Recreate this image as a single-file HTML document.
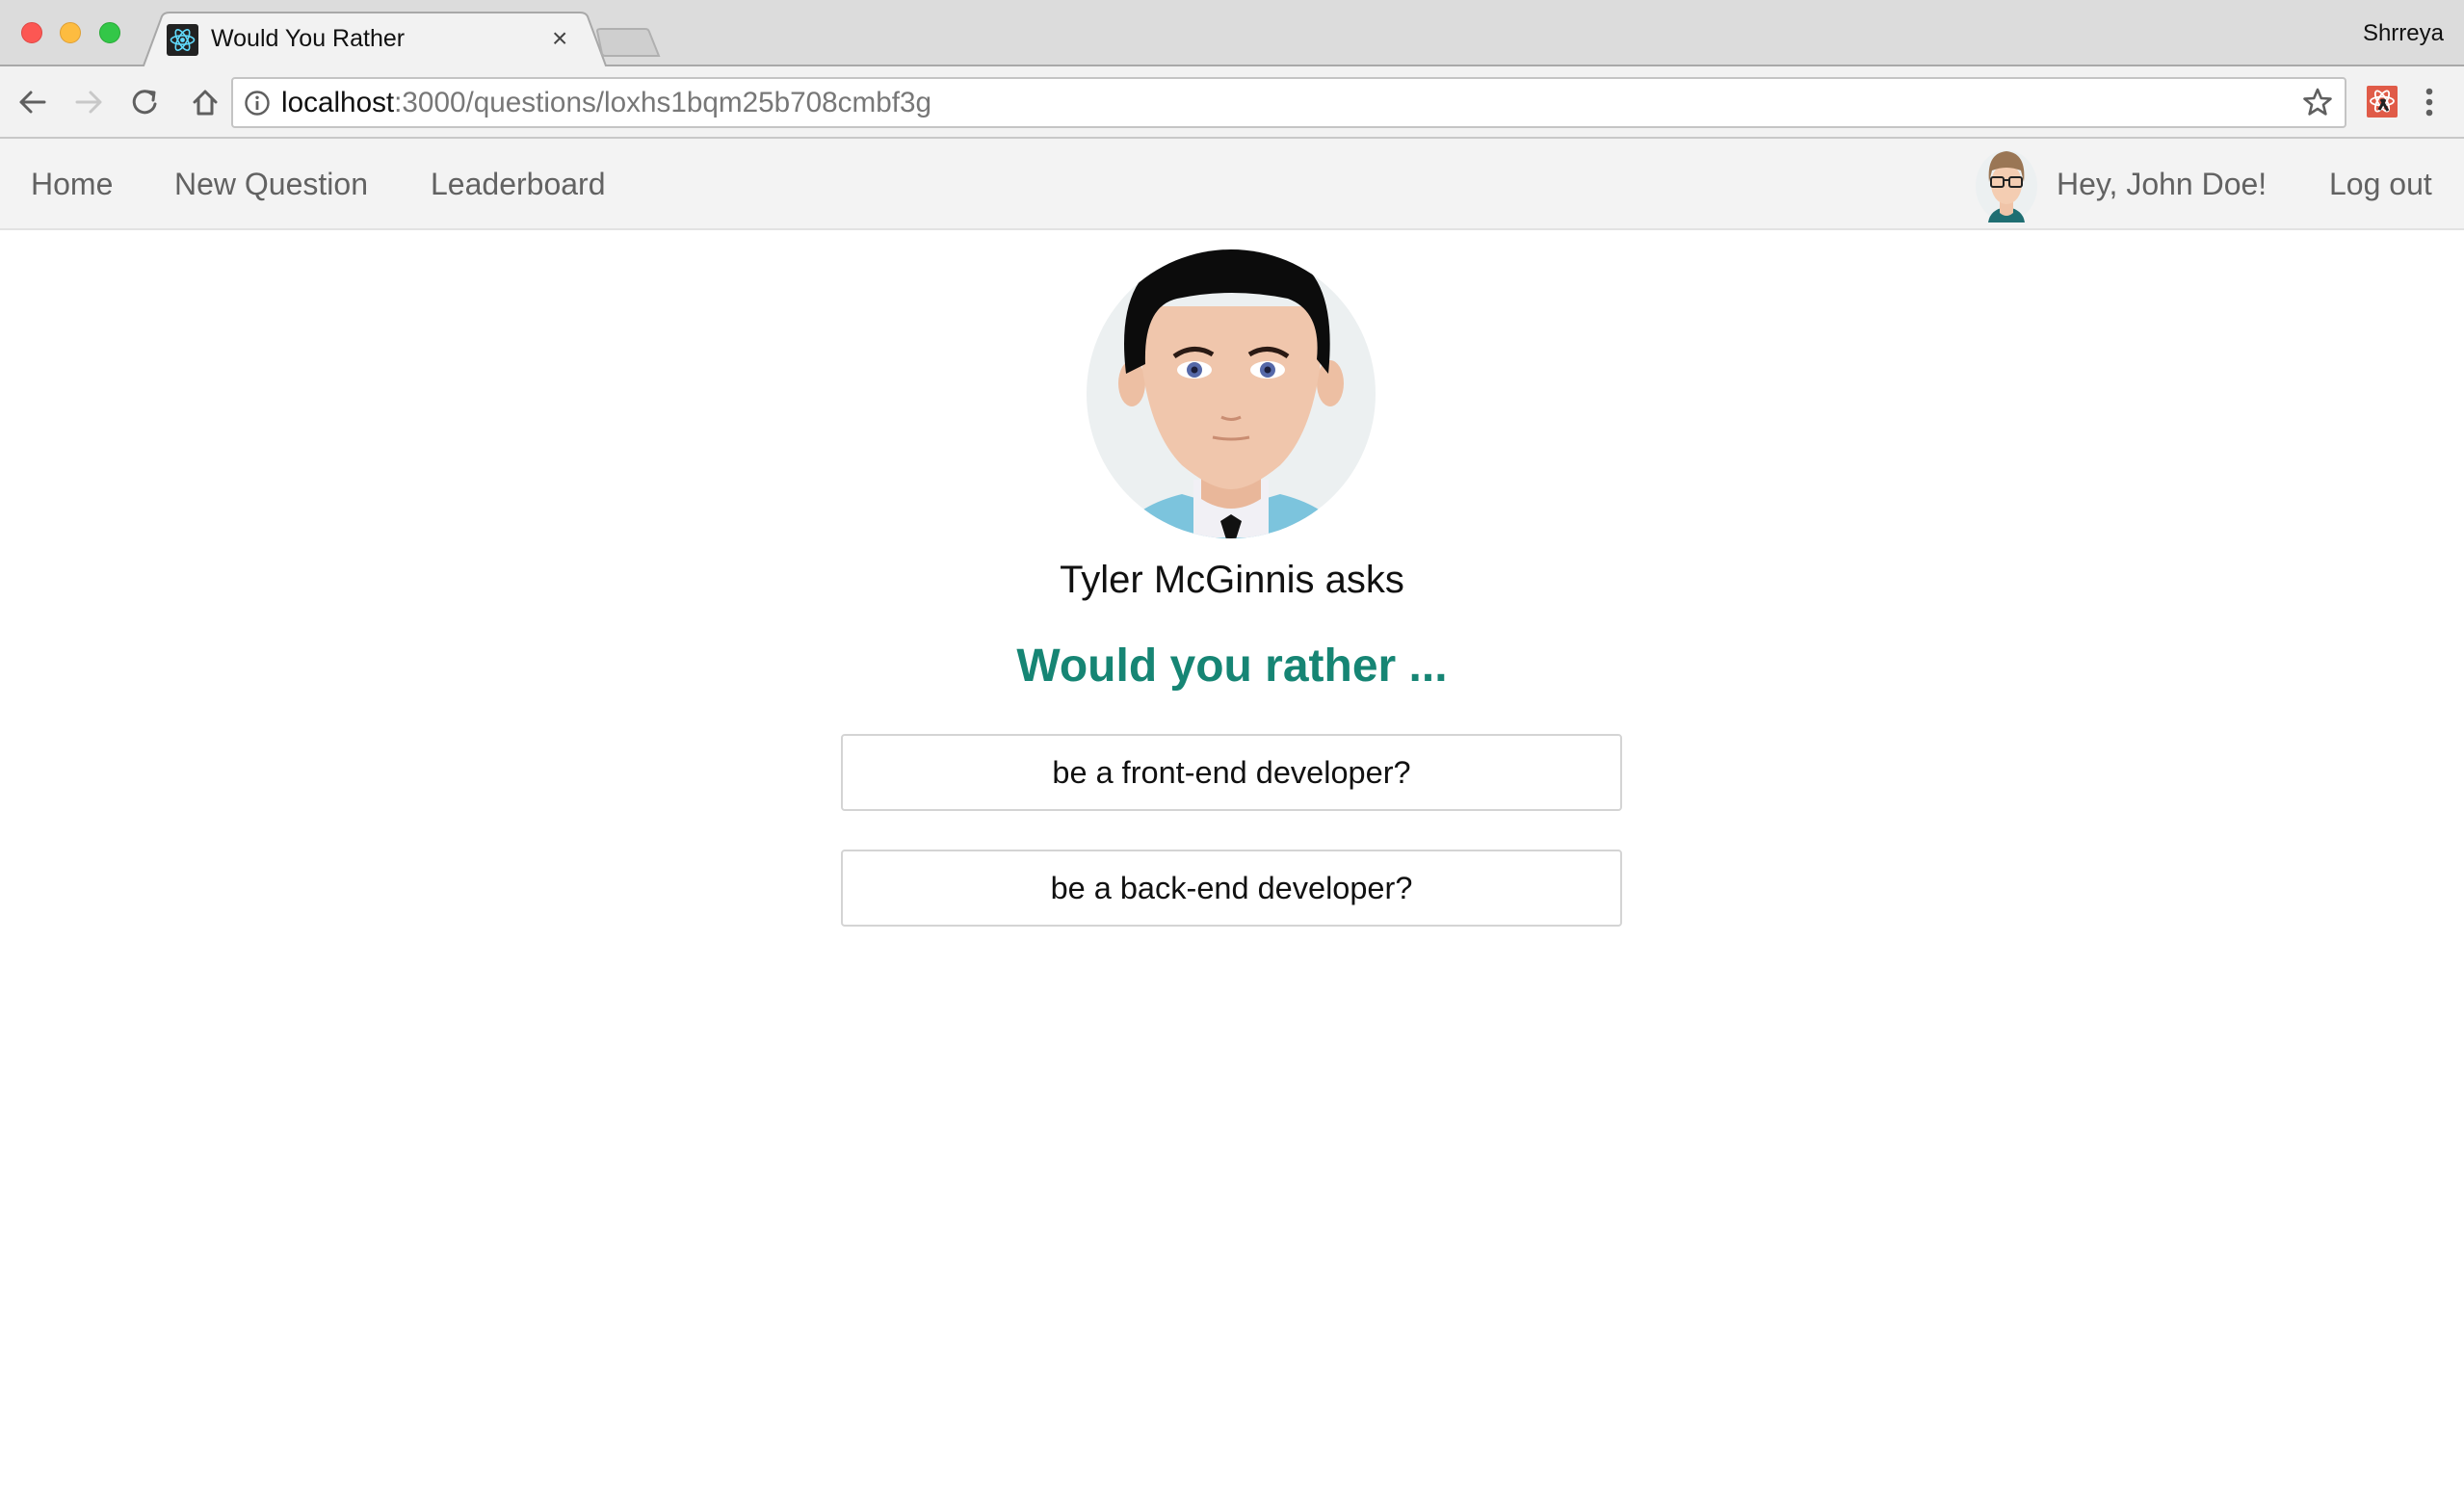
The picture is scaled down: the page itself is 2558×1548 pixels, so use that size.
<!DOCTYPE html>
<html><head><meta charset="utf-8"><style>
*{margin:0;padding:0;box-sizing:border-box}
body{width:2558px;height:1548px;background:#fff;font-family:"Liberation Sans",Arial,sans-serif;position:relative;overflow:hidden}
.abs{position:absolute}
#tabbar{left:0;top:0;width:2558px;height:69px;background:#dcdcdc;border-bottom:2px solid #a8a8a8}
#toolbar{left:0;top:69px;width:2558px;height:75px;background:#f2f2f2;border-bottom:2px solid #c8c8c8}
#nav{left:0;top:144px;width:2558px;height:95px;background:#f3f3f3;border-bottom:2px solid #e2e2e2}
.dot{width:22px;height:22px;border-radius:50%;top:23px}
.navt{font-size:32px;color:#626262;top:173px;white-space:nowrap}
.btn{left:873px;width:811px;height:80px;border:2px solid #d4d4d4;border-radius:4px;font-size:32.5px;text-align:center;line-height:76px;color:#111}
</style></head><body>
<div id="tabbar" class="abs"></div>
<div class="abs dot" style="left:22px;background:#fc5753;border:1px solid #df4744"></div>
<div class="abs dot" style="left:62px;background:#fdbc40;border:1px solid #de9f34"></div>
<div class="abs dot" style="left:103px;background:#33c748;border:1px solid #27aa35"></div>
<svg class="abs" style="left:140px;top:12px" width="560" height="59"><path d="M8 59 L28 5 Q30 1 36 1 L462 1 Q468 1 470 5 L490 59 Z" fill="#f2f2f2" stroke="#a8a8a8" stroke-width="2"/></svg>
<svg class="abs" style="left:618px;top:28px" width="72" height="34"><path d="M2 4 Q2 2 6 2 L52 2 Q55 2 56 5 L66 30 L10 30 Q8 30 7 28 Z" fill="#cfcfcf" stroke="#b0b0b0" stroke-width="2"/></svg>
<svg class="abs" style="left:173px;top:25px" width="33" height="33"><rect width="33" height="33" rx="3" fill="#222"/><g fill="none" stroke="#61dafb" stroke-width="1.6"><ellipse cx="16.5" cy="16.5" rx="12" ry="4.6"/><ellipse cx="16.5" cy="16.5" rx="12" ry="4.6" transform="rotate(60 16.5 16.5)"/><ellipse cx="16.5" cy="16.5" rx="12" ry="4.6" transform="rotate(120 16.5 16.5)"/></g><circle cx="16.5" cy="16.5" r="2.4" fill="#61dafb"/></svg>
<div class="abs" style="left:219px;top:26px;font-size:25px;color:#111">Would You Rather</div>
<div class="abs" style="left:573px;top:24px;font-size:28px;color:#444">×</div>
<div class="abs" style="right:21px;top:21px;font-size:24px;color:#111">Shrreya</div>
<div id="toolbar" class="abs"></div>
<svg class="abs" style="left:18px;top:90px" width="220" height="34" fill="none" stroke-width="3" stroke-linecap="round" stroke-linejoin="round">
<path d="M4 16 H28 M4 16 L14 6 M4 16 L14 26" stroke="#5f5f5f"/>
<path d="M86 16 H62 M86 16 L76 6 M86 16 L76 26" stroke="#c8c8c8"/>
<path d="M140 8 A11 11 0 1 0 143 18" stroke="#5f5f5f"/><path d="M134 5 L142 6 L141 14" stroke="#5f5f5f"/>
<path d="M184 16 L195 5 L206 16 M188 13 V28 H202 V13" stroke="#5f5f5f"/>
</svg>
<div class="abs" style="left:240px;top:80px;width:2196px;height:53px;background:#fff;border:2px solid #c4c4c4;border-radius:4px"></div>
<svg class="abs" style="left:253px;top:93px" width="28" height="28"><circle cx="14" cy="14" r="11.5" fill="none" stroke="#5f5f5f" stroke-width="2.4"/><rect x="12.6" y="12" width="2.8" height="9" fill="#5f5f5f"/><circle cx="14" cy="8.3" r="1.7" fill="#5f5f5f"/></svg>
<div class="abs" style="left:292px;top:90px;font-size:29.7px;color:#111;white-space:nowrap">localhost<span style="color:#777">:3000/questions/loxhs1bqm25b708cmbf3g</span></div>
<svg class="abs" style="left:2390px;top:90px" width="32" height="32"><path d="M16 3 L19.8 12 L29.5 12.6 L22 18.8 L24.4 28.4 L16 23 L7.6 28.4 L10 18.8 L2.5 12.6 L12.2 12 Z" fill="none" stroke="#5f5f5f" stroke-width="2.6" stroke-linejoin="round"/></svg>
<svg class="abs" style="left:2457px;top:89px" width="32" height="33"><rect width="32" height="33" rx="2" fill="#e05b48"/><g fill="none" stroke="#fff" stroke-width="1.8"><ellipse cx="16" cy="16" rx="12" ry="4.5"/><ellipse cx="16" cy="16" rx="12" ry="4.5" transform="rotate(60 16 16)"/><ellipse cx="16" cy="16" rx="12" ry="4.5" transform="rotate(120 16 16)"/></g><path d="M15 14 L22 26 M19 14 L13 25" stroke="#222" stroke-width="3"/></svg>
<svg class="abs" style="left:2514px;top:90px" width="16" height="34"><circle cx="8" cy="5" r="3.3" fill="#5f5f5f"/><circle cx="8" cy="16" r="3.3" fill="#5f5f5f"/><circle cx="8" cy="27" r="3.3" fill="#5f5f5f"/></svg>
<div id="nav" class="abs"></div>
<div class="abs navt" style="left:32px">Home</div>
<div class="abs navt" style="left:181px">New Question</div>
<div class="abs navt" style="left:447px">Leaderboard</div>
<svg class="abs" style="left:2050px;top:149px" width="66" height="82" viewBox="0 0 66 82">
<ellipse cx="33" cy="44" rx="32" ry="37" fill="#ecf0f1"/>
<path d="M14 82 Q16 68 33 66 Q50 68 52 82 Z" fill="#1f6e72"/>
<path d="M26 60 L26 72 Q33 78 40 72 L40 60 Z" fill="#f0c4a8"/>
<ellipse cx="33" cy="42" rx="16" ry="21" fill="#f4cdb2"/>
<path d="M15 40 Q12 10 33 8 Q54 10 51 40 L48 28 Q33 22 18 28 Z" fill="#9a7655"/>
<g fill="none" stroke="#222" stroke-width="2"><rect x="17" y="35" width="13" height="10" rx="2"/><rect x="36" y="35" width="13" height="10" rx="2"/><path d="M30 38 H36"/></g>
</svg>
<div class="abs navt" style="left:2135px">Hey, John Doe!</div>
<div class="abs navt" style="left:2418px">Log out</div>
<svg class="abs" style="left:1127px;top:258px" width="302" height="302" viewBox="0 0 302 302">
<defs><clipPath id="c"><ellipse cx="151" cy="151" rx="150" ry="150"/></clipPath></defs>
<ellipse cx="151" cy="151" rx="150" ry="150" fill="#ecf0f1"/>
<g clip-path="url(#c)">
<path d="M30 310 Q40 270 100 255 L151 270 L202 255 Q262 270 272 310 Z" fill="#7cc4dd"/>
<path d="M112 240 L112 300 L190 300 L190 240 Z" fill="#f1f0f5"/>
<path d="M140 283 L151 276 L162 283 L156 302 L146 302 Z" fill="#111"/>
<path d="M120 215 L120 260 Q151 280 182 260 L182 215 Z" fill="#e9b79a"/>
<ellipse cx="48" cy="140" rx="14" ry="24" fill="#edbfa3"/>
<ellipse cx="254" cy="140" rx="14" ry="24" fill="#edbfa3"/>
<path d="M55 60 Q55 180 100 225 Q130 250 151 250 Q172 250 202 225 Q247 180 247 60 Z" fill="#f0c6ac"/>
<path d="M42 130 Q30 30 90 8 Q151 -10 212 8 Q262 30 252 130 L240 115 Q245 65 210 52 Q151 40 95 52 Q60 60 62 120 Z" fill="#0c0c0c"/>
<ellipse cx="113" cy="126" rx="18" ry="9" fill="#fff"/><circle cx="113" cy="126" r="8" fill="#5568a8"/><circle cx="113" cy="126" r="3.5" fill="#1a1d3a"/>
<ellipse cx="189" cy="126" rx="18" ry="9" fill="#fff"/><circle cx="189" cy="126" r="8" fill="#5568a8"/><circle cx="189" cy="126" r="3.5" fill="#1a1d3a"/>
<path d="M92 112 Q112 98 132 110 M170 110 Q190 98 210 112" stroke="#2a1a14" stroke-width="5" fill="none"/>
<path d="M141 175 Q151 180 161 175" stroke="#c98d72" stroke-width="3" fill="none"/>
<path d="M132 196 Q151 200 170 196" stroke="#c98d72" stroke-width="3" fill="none"/>
</g></svg>
<div class="abs" style="left:0;width:2558px;top:580px;text-align:center;font-size:40px;color:#111">Tyler McGinnis asks</div>
<div class="abs" style="left:0;width:2558px;top:664px;text-align:center;font-size:48px;font-weight:bold;color:#168574">Would you rather ...</div>
<div class="abs btn" style="top:762px">be a front-end developer?</div>
<div class="abs btn" style="top:882px">be a back-end developer?</div>
</body></html>
